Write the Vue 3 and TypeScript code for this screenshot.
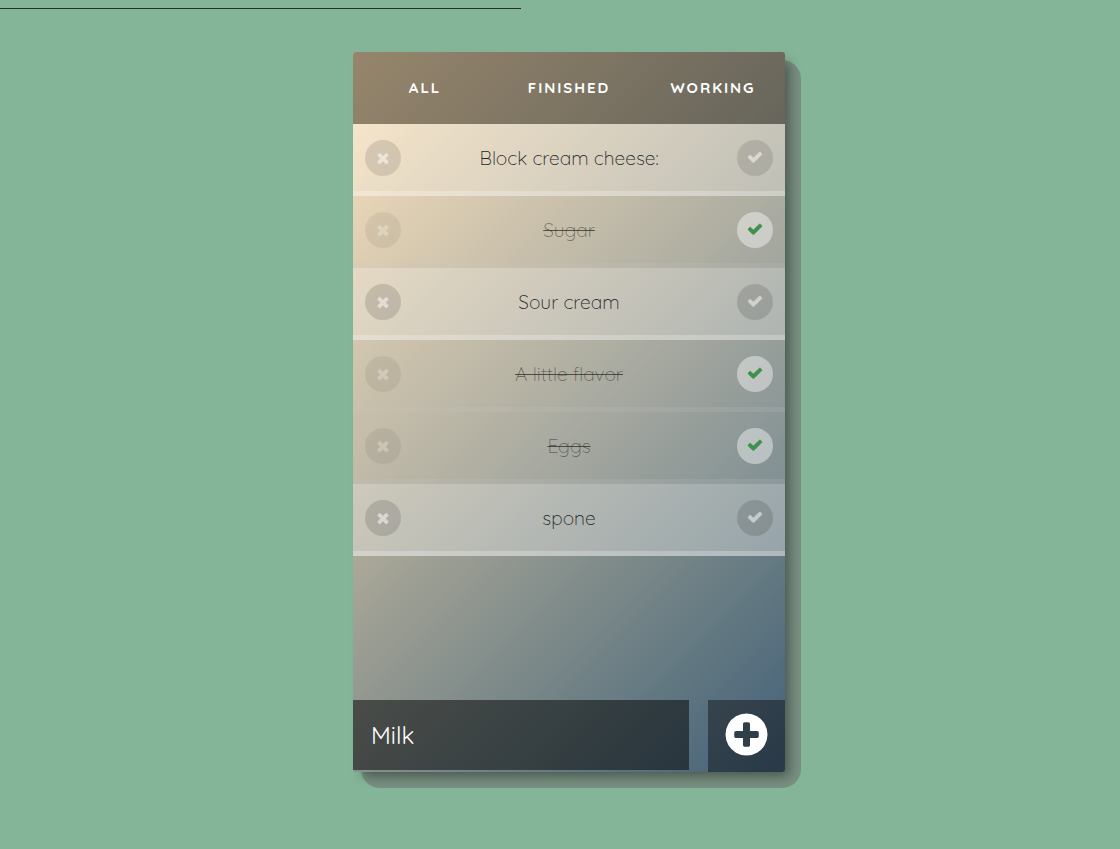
<script setup lang="ts">
import { ref } from 'vue'

interface Item {
  text: string
  done: boolean
}

const tabs = ['ALL', 'FINISHED', 'WORKING']
const items = ref<Item[]>([
  { text: 'Block cream cheese:', done: false },
  { text: 'Sugar', done: true },
  { text: 'Sour cream', done: false },
  { text: 'A little flavor', done: true },
  { text: 'Eggs', done: true },
  { text: 'spone', done: false },
])
const draft = ref('Milk')

function add() {
  const text = draft.value.trim()
  if (text) items.value.push({ text, done: false })
  draft.value = ''
}
</script>

<template>
  <main class="page">
    <div class="rule"></div>
    <section class="card">
      <nav class="tabs">
        <span v-for="t in tabs" :key="t" class="tab">{{ t }}</span>
      </nav>
      <ul class="list">
        <li v-for="(item, i) in items" :key="i" class="row" :class="{ done: item.done }">
          <button class="round remove" aria-label="Remove" @click="items.splice(i, 1)">
            <svg class="times" viewBox="0 0 1792 1792"><path d="M1490 1322q0 40-28 68l-136 136q-28 28-68 28t-68-28l-294-294-294 294q-28 28-68 28t-68-28l-136-136q-28-28-28-68t28-68l294-294-294-294q-28-28-28-68t28-68l136-136q28-28 68-28t68 28l294 294 294-294q28-28 68-28t68 28l136 136q28 28 28 68t-28 68l-294 294 294 294q28 28 28 68z" /></svg>
          </button>
          <span class="label"><span class="text">{{ item.text }}</span></span>
          <button class="round toggle" aria-label="Toggle" @click="item.done = !item.done">
            <svg class="check" viewBox="0 0 1792 1792"><path d="M1671 566q0 40-28 68l-724 724-136 136q-28 28-68 28t-68-28l-136-136-362-362q-28-28-28-68t28-68l136-136q28-28 68-28t68 28l294 295 656-657q28-28 68-28t68 28l136 136q28 28 28 68z" /></svg>
          </button>
        </li>
      </ul>
      <form class="entry" @submit.prevent="add">
        <input v-model="draft" class="field" type="text" spellcheck="false" />
        <button class="add" type="submit" aria-label="Add">
          <svg viewBox="0 0 1792 1792"><path d="M1344 960v-128q0-26-19-45t-45-19h-256v-256q0-26-19-45t-45-19h-128q-26 0-45 19t-19 45v256h-256q-26 0-45 19t-19 45v128q0 26 19 45t45 19h256v256q0 26 19 45t45 19h128q26 0 45-19t19-45v-256h256q26 0 45-19t19-45zm320-64q0 209-103 385.500t-279.500 279.500-385.500 103-385.500-103-279.500-279.500-103-385.500 103-385.500 279.500-279.500 385.500-103 385.500 103 279.500 279.500 103 385.500z" /></svg>
        </button>
      </form>
    </section>
  </main>
</template>

<style>
body {
  margin: 0;
  background: #85b598;
}
</style>

<style scoped>
.page {
  box-sizing: border-box;
  height: 849px;
  padding-top: 8px;
  overflow: hidden;
  background: #85b598;
  font-family: Quicksand, Lato, sans-serif;
}
.rule {
  width: 521px;
  height: 1px;
  background: #2b2d2c;
}
.card {
  position: relative;
  isolation: isolate;
  display: flex;
  flex-direction: column;
  width: 432px;
  height: 720px;
  margin: 43px 0 0 353px;
}
.card::before,
.card::after {
  content: '';
  position: absolute;
  inset: 0;
  z-index: -1;
  border-radius: 3px;
  background: linear-gradient(135deg, #fbdfb4, #aba898 44%, #627881 82%, #446079);
  box-shadow: 7px 7px 11px -3px rgba(0, 0, 0, 0.4);
}
.card::before {
  inset: 8px -16px -16px 8px;
  z-index: -2;
  border-radius: 19px;
  background: #788f81;
  box-shadow: none;
}
.tabs {
  display: flex;
  height: 72px;
  border-radius: 3px 3px 0 0;
  background: rgba(0, 0, 0, 0.4);
}
.tab {
  flex: 1;
  color: #fff;
  font-size: 15px;
  font-weight: 700;
  line-height: 72px;
  letter-spacing: 1.95px;
  text-align: center;
}
.list {
  flex: 1;
  margin: 0;
  padding: 0;
  list-style: none;
}
.row {
  box-sizing: border-box;
  display: flex;
  align-items: center;
  height: 72px;
  padding: 1px 12px 0;
  border-bottom: 5px solid rgba(255, 255, 255, 0.24);
  background: rgba(255, 255, 255, 0.32);
}
.row.done {
  border-bottom-color: rgba(200, 200, 200, 0.16);
  background: rgba(255, 255, 255, 0.12);
}
.label {
  flex: 1;
  color: #262626;
  font-size: 19.2px;
  font-weight: 300;
  line-height: 28px;
  text-align: center;
}
.done .text {
  color: rgba(40, 40, 35, 0.55);
  text-decoration: line-through 1px rgba(50, 48, 42, 0.78);
}
.round {
  display: flex;
  align-items: center;
  justify-content: center;
  width: 36px;
  height: 36px;
  padding: 0;
  border: 0;
  border-radius: 50%;
  background: rgba(0, 0, 0, 0.13);
}
.round svg {
  display: block;
  overflow: visible;
  fill: #fff;
  stroke: #fff;
  stroke-width: 70;
  opacity: 0.52;
}
.times {
  width: 16px;
  height: 16px;
  margin-bottom: 1px;
}
.check {
  width: 16px;
  height: 16px;
  margin-bottom: 2px;
}
.row:first-child .round {
  background: rgba(0, 0, 0, 0.11);
}
.done .remove {
  opacity: 0.45;
}
.done .round.toggle {
  background: rgba(255, 255, 255, 0.42);
}
.done .toggle .check {
  fill: #40904b;
  stroke: #40904b;
  opacity: 1;
}
.entry {
  display: flex;
  justify-content: space-between;
  height: 72px;
}
.field {
  box-sizing: border-box;
  width: 336px;
  height: 70px;
  padding: 0 18px;
  border: 0;
  outline: 0;
  background: rgba(0, 0, 0, 0.5);
  color: #fff;
  font: 400 24px Quicksand, Lato, sans-serif;
}
.add {
  display: flex;
  align-items: center;
  justify-content: center;
  width: 77px;
  height: 72px;
  padding: 0 0 2.4px;
  border: 0;
  border-radius: 0 0 3px 0;
  background: rgba(0, 0, 0, 0.4);
}
.add svg {
  width: 49px;
  height: 49px;
  fill: #fff;
}
</style>
